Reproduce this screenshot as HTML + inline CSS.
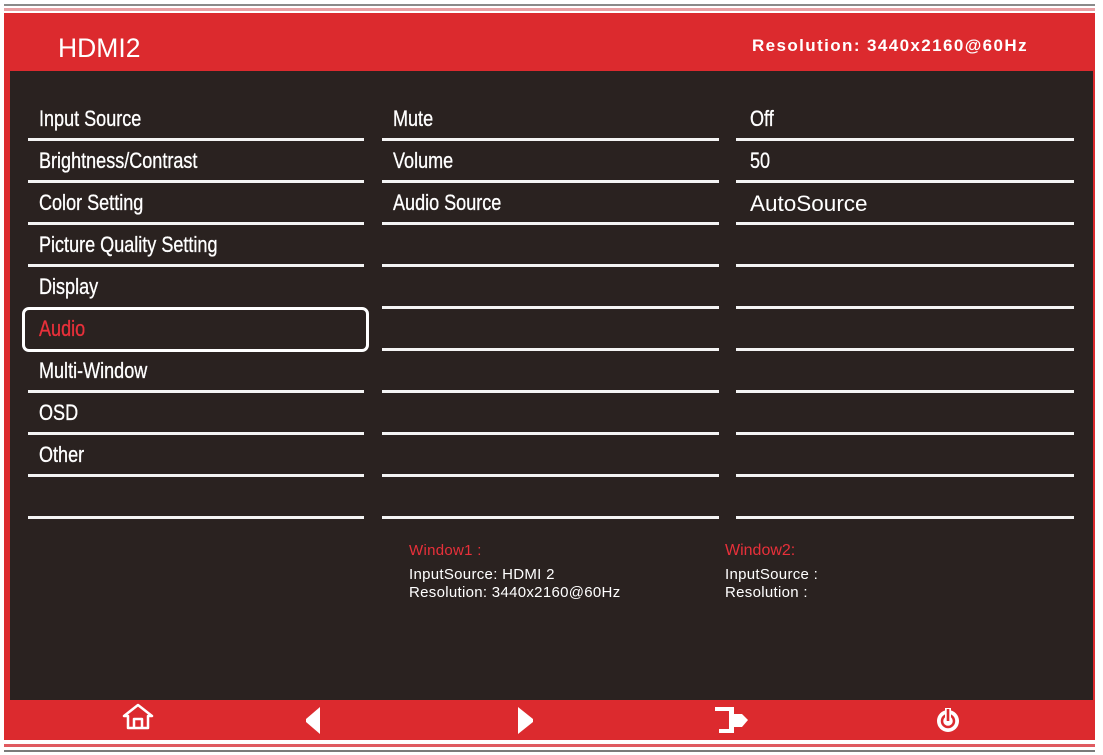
<!DOCTYPE html>
<html><head><meta charset="utf-8"><style>
*{margin:0;padding:0;box-sizing:border-box}
body{width:1103px;height:755px;background:#fff;position:relative;overflow:hidden;font-family:"Liberation Sans",Arial,sans-serif}
.a{position:absolute}
.t{position:absolute;color:#fff;font-size:22px;white-space:nowrap;transform:scaleX(0.82);transform-origin:left center;line-height:24px;-webkit-text-stroke:0.3px #fff}
.l{position:absolute;height:3px;background:#f4f4f4}
.s{position:absolute;color:#fff;font-size:15px;white-space:nowrap;line-height:17px;letter-spacing:0.3px}
</style></head><body>
<div class="a" style="left:4px;top:4px;width:1091px;height:2px;background:#8a8a8a"></div>
<div class="a" style="left:4px;top:8px;width:1091px;height:3px;background:#e8a0a4"></div>
<div class="a" style="left:4px;top:13px;width:1091px;height:58px;background:#dc2a2e"></div>
<div class="a" style="left:4px;top:71px;width:1091px;height:630px;background:#dc2a2e"></div>
<div class="a" style="left:10px;top:71px;width:1083px;height:629px;background:#2a2220"></div>
<div class="a" style="left:4px;top:701px;width:1091px;height:39px;background:#dc2a2e"></div>
<div class="a" style="left:4px;top:740px;width:1091px;height:3px;background:#fff"></div>
<div class="a" style="left:4px;top:744px;width:1091px;height:3px;background:#e05a60"></div>
<div class="a" style="left:4px;top:750px;width:1091px;height:2px;background:#7a7a7a"></div>

<div class="a" style="left:58px;top:33px;color:#fff;font-size:26.5px;line-height:30px">HDMI2</div>
<div class="a" style="left:752px;top:36px;color:#fff;font-size:17px;font-weight:bold;line-height:20px;letter-spacing:1.4px">Resolution: 3440x2160@60Hz</div>

<div class="t" style="left:39px;top:107px">Input Source</div>
<div class="t" style="left:39px;top:149px">Brightness/Contrast</div>
<div class="t" style="left:39px;top:191px">Color Setting</div>
<div class="t" style="left:39px;top:233px">Picture Quality Setting</div>
<div class="t" style="left:39px;top:275px">Display</div>
<div class="t" style="left:39px;top:317px;color:#e8303a;-webkit-text-stroke:0.3px #e8303a">Audio</div>
<div class="t" style="left:39px;top:359px">Multi-Window</div>
<div class="t" style="left:39px;top:401px">OSD</div>
<div class="t" style="left:39px;top:443px">Other</div>
<div class="a" style="left:22px;top:307px;width:347px;height:45px;border:3px solid #fff;border-radius:7px"></div>

<div class="t" style="left:393px;top:107px">Mute</div>
<div class="t" style="left:393px;top:149px">Volume</div>
<div class="t" style="left:393px;top:191px">Audio Source</div>
<div class="t" style="left:750px;top:107px">Off</div>
<div class="t" style="left:750px;top:149px">50</div>
<div class="a" style="left:750px;top:191px;color:#fff;font-size:22.5px;line-height:26px">AutoSource</div>

<div class="l" style="left:28px;top:138px;width:336px"></div>
<div class="l" style="left:28px;top:180px;width:336px"></div>
<div class="l" style="left:28px;top:222px;width:336px"></div>
<div class="l" style="left:28px;top:264px;width:336px"></div>
<div class="l" style="left:28px;top:390px;width:336px"></div>
<div class="l" style="left:28px;top:432px;width:336px"></div>
<div class="l" style="left:28px;top:474px;width:336px"></div>
<div class="l" style="left:28px;top:516px;width:336px"></div>

<div class="l" style="left:382px;top:138px;width:337px"></div>
<div class="l" style="left:382px;top:180px;width:337px"></div>
<div class="l" style="left:382px;top:222px;width:337px"></div>
<div class="l" style="left:382px;top:264px;width:337px"></div>
<div class="l" style="left:382px;top:306px;width:337px"></div>
<div class="l" style="left:382px;top:348px;width:337px"></div>
<div class="l" style="left:382px;top:390px;width:337px"></div>
<div class="l" style="left:382px;top:432px;width:337px"></div>
<div class="l" style="left:382px;top:474px;width:337px"></div>
<div class="l" style="left:382px;top:516px;width:337px"></div>

<div class="l" style="left:736px;top:138px;width:338px"></div>
<div class="l" style="left:736px;top:180px;width:338px"></div>
<div class="l" style="left:736px;top:222px;width:338px"></div>
<div class="l" style="left:736px;top:264px;width:338px"></div>
<div class="l" style="left:736px;top:306px;width:338px"></div>
<div class="l" style="left:736px;top:348px;width:338px"></div>
<div class="l" style="left:736px;top:390px;width:338px"></div>
<div class="l" style="left:736px;top:432px;width:338px"></div>
<div class="l" style="left:736px;top:474px;width:338px"></div>
<div class="l" style="left:736px;top:516px;width:338px"></div>

<div class="s" style="left:409px;top:542px;color:#e8303a">Window1 :</div>
<div class="s" style="left:409px;top:566px">InputSource: HDMI 2</div>
<div class="s" style="left:409px;top:584px">Resolution: 3440x2160@60Hz</div>
<div class="s" style="left:725px;top:542px;color:#e8303a;font-size:16px;letter-spacing:0">Window2:</div>
<div class="s" style="left:725px;top:566px">InputSource :</div>
<div class="s" style="left:725px;top:584px">Resolution :</div>

<svg class="a" style="left:0;top:700px" width="1103" height="40">
<g fill="none" stroke="#fff" stroke-width="2.5" stroke-linejoin="round">
<path d="M124 16 L138 5 L152 16 L148 16 L148 28 L128 28 L128 16 Z"/>
<path d="M134 28 L134 19 L142 19 L142 28"/>
</g>
<path d="M320 7 L320 34 L306 22 L306 19 Z" fill="#fff"/>
<path d="M518 7 L518 34 L533 22 L533 19 Z" fill="#fff"/>
<path d="M715 7 L734 7 L734 33 L719 33 L719 29 L729 29 L729 11 L715 11 Z" fill="#fff"/>
<path d="M734 14 L742 14 L748 20 L742 27 L734 27 Z" fill="#fff"/>
<circle cx="948" cy="21" r="11" fill="#fff"/>
<circle cx="948" cy="21" r="6" fill="none" stroke="#dc2a2e" stroke-width="2.5"/>
<rect x="945" y="8" width="6" height="13" fill="#fff"/>
<rect x="946.7" y="9" width="2.6" height="12" fill="#dc2a2e"/>
</svg>
</body></html>
